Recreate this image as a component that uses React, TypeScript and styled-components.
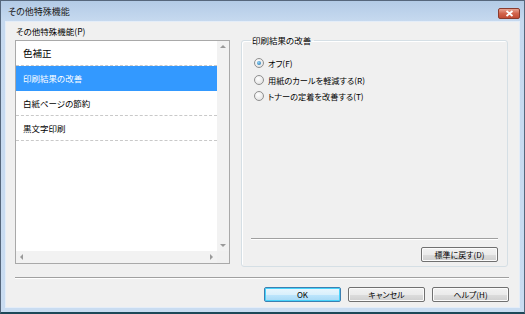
import styled, { createGlobalStyle, css } from 'styled-components'

const GlobalStyle = createGlobalStyle`
  html, body {
    margin: 0;
    padding: 0;
    background: #1d4858;
  }
  body {
    font-family: "Noto Sans CJK JP", "Noto Sans", sans-serif;
    font-size: 8.5px;
    font-feature-settings: "palt";
    color: #000;
  }
  * { box-sizing: border-box; }
`

const Window = styled.div`
  width: 525px;
  height: 314px;
  display: flex;
  flex-direction: column;
  border: 1px solid #56677c;
  border-bottom: 2px solid #1d4858;
  background: linear-gradient(#b3cbe6 0, #c6d9ef 20px, #c9dcf1 100%);
  padding: 0 4px 4px 4px;
`

const TitleBar = styled.div`
  height: 20px;
  display: flex;
  align-items: center;
  justify-content: space-between;
  padding: 0 2px 0 3px;
`

const Title = styled.div`
  font-size: 9px;
  color: #1a1a1a;
`

const CloseButton = styled.div`
  width: 22px;
  height: 11px;
  margin-top: 4px;
  margin-right: -2px;
  border: 1px solid #8a3b2e;
  border-radius: 2px;
  background: linear-gradient(#e8a493 0, #d2644c 50%, #c14b34 100%);
  display: flex;
  align-items: center;
  justify-content: center;
`

const Client = styled.div`
  flex: 1;
  display: flex;
  flex-direction: column;
  background: #f0f0f0;
  border: 1px solid #e4edf8;
  padding: 2px 10px 0 9px;
`

const Body = styled.div`
  display: flex;
  gap: 11px;
`

const LeftColumn = styled.div`
  width: 215px;
  display: flex;
  flex-direction: column;
`

const FieldLabel = styled.div`
  height: 16px;
  line-height: 14px;
  padding-left: 1px;
`

const ListBox = styled.div`
  height: 224px;
  border: 1px solid #a9a9a9;
  display: grid;
  grid-template-columns: 1fr 12px;
  grid-template-rows: 1fr 12px;
  background: #fff;
`

const ListItems = styled.div`
  display: flex;
  flex-direction: column;
`

const ListItem = styled.div<{ $selected?: boolean; $large?: boolean }>`
  height: 25px;
  display: flex;
  align-items: center;
  padding-left: 7px;
  border-bottom: 1px dashed #c9c9c9;
  font-size: ${p => (p.$large ? '9.5px' : '8.5px')};
  ${p =>
    p.$selected &&
    css`
      background: #3399ff;
      color: #fff;
      border-bottom-color: #3399ff;
    `}
`

const ScrollTrack = styled.div<{ $vertical?: boolean }>`
  background: #f2f2f2;
  display: flex;
  flex-direction: ${p => (p.$vertical ? 'column' : 'row')};
  align-items: center;
  justify-content: space-between;
  padding: ${p => (p.$vertical ? '4px 0' : '0 4px')};
`

const ScrollCorner = styled.div`
  background: #f0f0f0;
`

const Arrow = styled.div<{ $dir: 'up' | 'down' | 'left' | 'right' }>`
  width: 0;
  height: 0;
  border: 3px solid transparent;
  ${p => p.$dir === 'up' && css`border-bottom: 3px solid #9a9a9a; border-top-width: 0;`}
  ${p => p.$dir === 'down' && css`border-top: 3px solid #9a9a9a; border-bottom-width: 0;`}
  ${p => p.$dir === 'left' && css`border-right: 3px solid #9a9a9a; border-left-width: 0;`}
  ${p => p.$dir === 'right' && css`border-left: 3px solid #9a9a9a; border-right-width: 0;`}
`

const GroupBox = styled.fieldset`
  width: 267px;
  height: 232px;
  margin: 11px 0 0 0;
  padding: 4px 9px 4px 9px;
  border: 1px solid #d5dfe5;
  border-radius: 3px;
  box-shadow: inset 1px 1px 0 #fff;
  display: flex;
  flex-direction: column;
`

const Legend = styled.legend`
  padding: 0 3px 0 1px;
  margin-left: 0;
  line-height: 10px;
`

const RadioList = styled.div`
  display: flex;
  flex-direction: column;
  gap: 4.5px;
  padding: 8px 0 0 3px;
`

const RadioRow = styled.label`
  display: flex;
  align-items: center;
  gap: 4px;
  height: 12px;
  font-size: 8.2px;
`

const RadioCircle = styled.span<{ $checked?: boolean }>`
  width: 10px;
  height: 10px;
  border-radius: 50%;
  border: 1px solid #8f8f8f;
  background: radial-gradient(circle at 40% 35%, #ffffff 0, #e6e6e6 70%, #d6d6d6 100%);
  display: flex;
  align-items: center;
  justify-content: center;
  &::after {
    content: '';
    width: 4px;
    height: 4px;
    border-radius: 50%;
    background: ${p => (p.$checked ? 'radial-gradient(circle at 40% 35%, #8fd0f7, #1c6ea4)' : 'transparent')};
  }
`

const GroupFooter = styled.div`
  margin-top: auto;
  display: flex;
  flex-direction: column;
  align-items: flex-end;
  gap: 7px;
`

const Separator = styled.div`
  align-self: stretch;
  height: 2px;
  border-top: 1px solid #a0a0a0;
  border-bottom: 1px solid #fff;
`

const Button = styled.div<{ $default?: boolean }>`
  width: 77px;
  height: 15px;
  display: flex;
  align-items: center;
  justify-content: center;
  font-size: 8px;
  border: 1px solid #707070;
  border-radius: 2px;
  background: linear-gradient(#f2f2f2 0, #ebebeb 50%, #dddddd 51%, #cfcfcf 100%);
  box-shadow: inset 0 0 0 1px #fbfbfb;
  ${p =>
    p.$default &&
    css`
      border-color: #3c7fb1;
      box-shadow: inset 0 0 0 1px #48d3fb;
      background: linear-gradient(#eaf6fd 0, #d9f0fc 50%, #bee6fd 51%, #a7d9f5 100%);
    `}
`

const Footer = styled.div`
  margin-top: 10px;
  display: flex;
  flex-direction: column;
  gap: 8px;
`

const ButtonRow = styled.div`
  display: flex;
  justify-content: flex-end;
  gap: 7px;
`

const items = ['色補正', '印刷結果の改善', '白紙ページの節約', '黒文字印刷']
const options = ['オフ(F)', '用紙のカールを軽減する(R)', 'トナーの定着を改善する(T)']

export default function App() {
  return (
    <>
      <GlobalStyle />
      <Window>
        <TitleBar>
          <Title>その他特殊機能</Title>
          <CloseButton>
            <svg width="9" height="7" viewBox="0 0 9 7">
              <path d="M1.5 1 L7.5 6 M7.5 1 L1.5 6" stroke="#fff" strokeWidth="1.8" />
            </svg>
          </CloseButton>
        </TitleBar>
        <Client>
          <Body>
            <LeftColumn>
              <FieldLabel>その他特殊機能(P)</FieldLabel>
              <ListBox>
                <ListItems>
                  {items.map((item, i) => (
                    <ListItem key={item} $selected={i === 1} $large={i === 0}>
                      {item}
                    </ListItem>
                  ))}
                </ListItems>
                <ScrollTrack $vertical>
                  <Arrow $dir="up" />
                  <Arrow $dir="down" />
                </ScrollTrack>
                <ScrollTrack>
                  <Arrow $dir="left" />
                  <Arrow $dir="right" />
                </ScrollTrack>
                <ScrollCorner />
              </ListBox>
            </LeftColumn>
            <GroupBox>
              <Legend>印刷結果の改善</Legend>
              <RadioList>
                {options.map((opt, i) => (
                  <RadioRow key={opt}>
                    <RadioCircle $checked={i === 0} />
                    {opt}
                  </RadioRow>
                ))}
              </RadioList>
              <GroupFooter>
                <Separator />
                <Button>標準に戻す(D)</Button>
              </GroupFooter>
            </GroupBox>
          </Body>
          <Footer>
            <Separator />
            <ButtonRow>
              <Button $default>OK</Button>
              <Button>キャンセル</Button>
              <Button>ヘルプ(H)</Button>
            </ButtonRow>
          </Footer>
        </Client>
      </Window>
    </>
  )
}
